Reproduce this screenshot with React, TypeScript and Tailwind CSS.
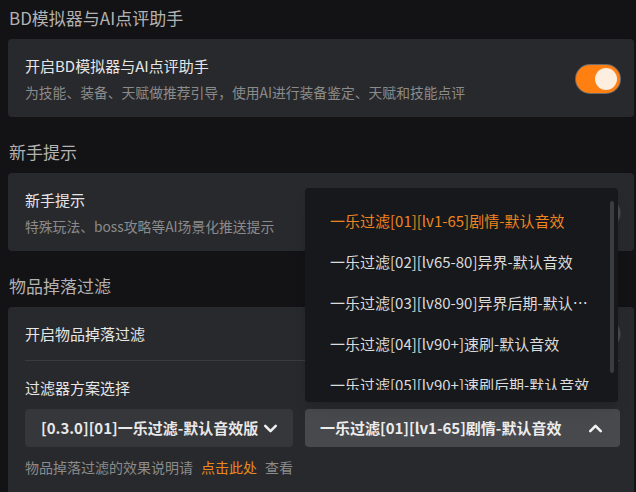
import { ChevronDown, ChevronUp } from "lucide-react";

const font = { fontFamily: '"Noto Sans CJK SC", "Noto Sans", sans-serif' };

function Toggle({ on }: { on?: boolean }) {
  return (
    <div
      className={
        "flex h-[28px] w-[44px] shrink-0 items-center rounded-full p-[3px] ring-1 " +
        (on ? "justify-end bg-[#ff7f11] ring-[#6b6b6b]" : "justify-start bg-[#4a4b4f] ring-[#3a3b3e]")
      }
    >
      <div className={"h-[22px] w-[22px] rounded-full " + (on ? "bg-[#fdeee0]" : "bg-[#bdb7ae]")} />
    </div>
  );
}

function Section({ title, first, children }: { title: string; first?: boolean; children: React.ReactNode }) {
  return (
    <div className={first ? "" : "mt-[25px]"}>
      <div className="mb-[11px] h-5 pl-[1px] text-[17px] leading-5 text-[#b2b2b2]">{title}</div>
      {children}
    </div>
  );
}

const options = [
  "一乐过滤[01][lv1-65]剧情-默认音效",
  "一乐过滤[02][lv65-80]异界-默认音效",
  "一乐过滤[03][lv80-90]异界后期-默认音效",
  "一乐过滤[04][lv90+]速刷-默认音效",
  "一乐过滤[05][lv90+]速刷后期-默认音效",
];

export default function App() {
  return (
    <div style={font} className="relative h-[492px] w-[636px] overflow-hidden bg-[#131316] pl-2 pr-[2px] pt-2">
      <Section title="BD模拟器与AI点评助手" first>
        <div className="flex items-center justify-between rounded bg-[#28292c] pb-4 pl-[17px] pr-[14px] pt-[17px]">
          <div>
            <p className="text-[15px] leading-5 text-[#e6e6e6]">开启BD模拟器与AI点评助手</p>
            <p className="mt-[7px] text-[13.8px] leading-[18px] text-[#8b8b8b]">
              为技能、装备、天赋做推荐引导，使用AI进行装备鉴定、天赋和技能点评
            </p>
          </div>
          <Toggle on />
        </div>
      </Section>

      <Section title="新手提示">
        <div className="flex items-center justify-between rounded bg-[#28292c] pb-4 pl-[17px] pr-[14px] pt-[17px]">
          <div>
            <p className="text-[15px] leading-5 text-[#e6e6e6]">新手提示</p>
            <p className="mt-[7px] text-[13.8px] leading-[18px] text-[#8b8b8b]">特殊玩法、boss攻略等AI场景化推送提示</p>
          </div>
          <Toggle />
        </div>
      </Section>

      <Section title="物品掉落过滤">
        <div className="rounded bg-[#28292c] pb-6 pl-[17px] pr-[14px]">
          <div className="flex h-[54px] items-center justify-between border-b border-[#3a3b3e]">
            <p className="text-[15px] leading-5 text-[#e6e6e6]">开启物品掉落过滤</p>
            <Toggle />
          </div>
          <p className="mt-[17px] text-[15px] leading-5 text-[#e6e6e6]">过滤器方案选择</p>
          <div className="mt-[11px] grid grid-cols-[268px_1fr] gap-3">
            <div className="flex h-[38px] items-center justify-between rounded bg-[#36373a] pl-4 pr-[12px]">
              <span className="text-[15px] font-bold text-[#e8e8e8]">[0.3.0][01]一乐过滤-默认音效版</span>
              <ChevronDown size={21} strokeWidth={3} className="text-[#eeeeee]" />
            </div>
            <div className="flex h-[38px] items-center justify-between rounded bg-[#48494c] pl-[15px] pr-[14px]">
              <span className="text-[15px] font-bold text-[#ececec]">一乐过滤[01][lv1-65]剧情-默认音效</span>
              <ChevronUp size={21} strokeWidth={3} className="text-[#f2f2f2]" />
            </div>
          </div>
          <p className="mt-[11px] text-[14px] leading-[18px] text-[#8b8b8b]">
            物品掉落过滤的效果说明请<span className="mx-2 text-[#e88a1e]">点击此处</span>查看
          </p>
        </div>
      </Section>

      <div className="absolute left-[305px] top-[188px] w-[313px] rounded-sm bg-[#17181b] pb-3 pt-[13px] shadow-lg">
        <div className="relative h-[189px] overflow-hidden">
          {options.map((o, i) => (
            <div
              key={o}
              className={
                "flex h-[41px] items-center pl-[25px] pr-[22px] text-[15px] " +
                (i === 0 ? "text-[#ee8420]" : "text-[#dcdcdc]")
              }
            >
              <span className="truncate">{o}</span>
            </div>
          ))}
        </div>
        <div className="absolute right-[4px] top-[13px] h-[172px] w-[4px] rounded-full bg-[#3b3c40]" />
      </div>
    </div>
  );
}
